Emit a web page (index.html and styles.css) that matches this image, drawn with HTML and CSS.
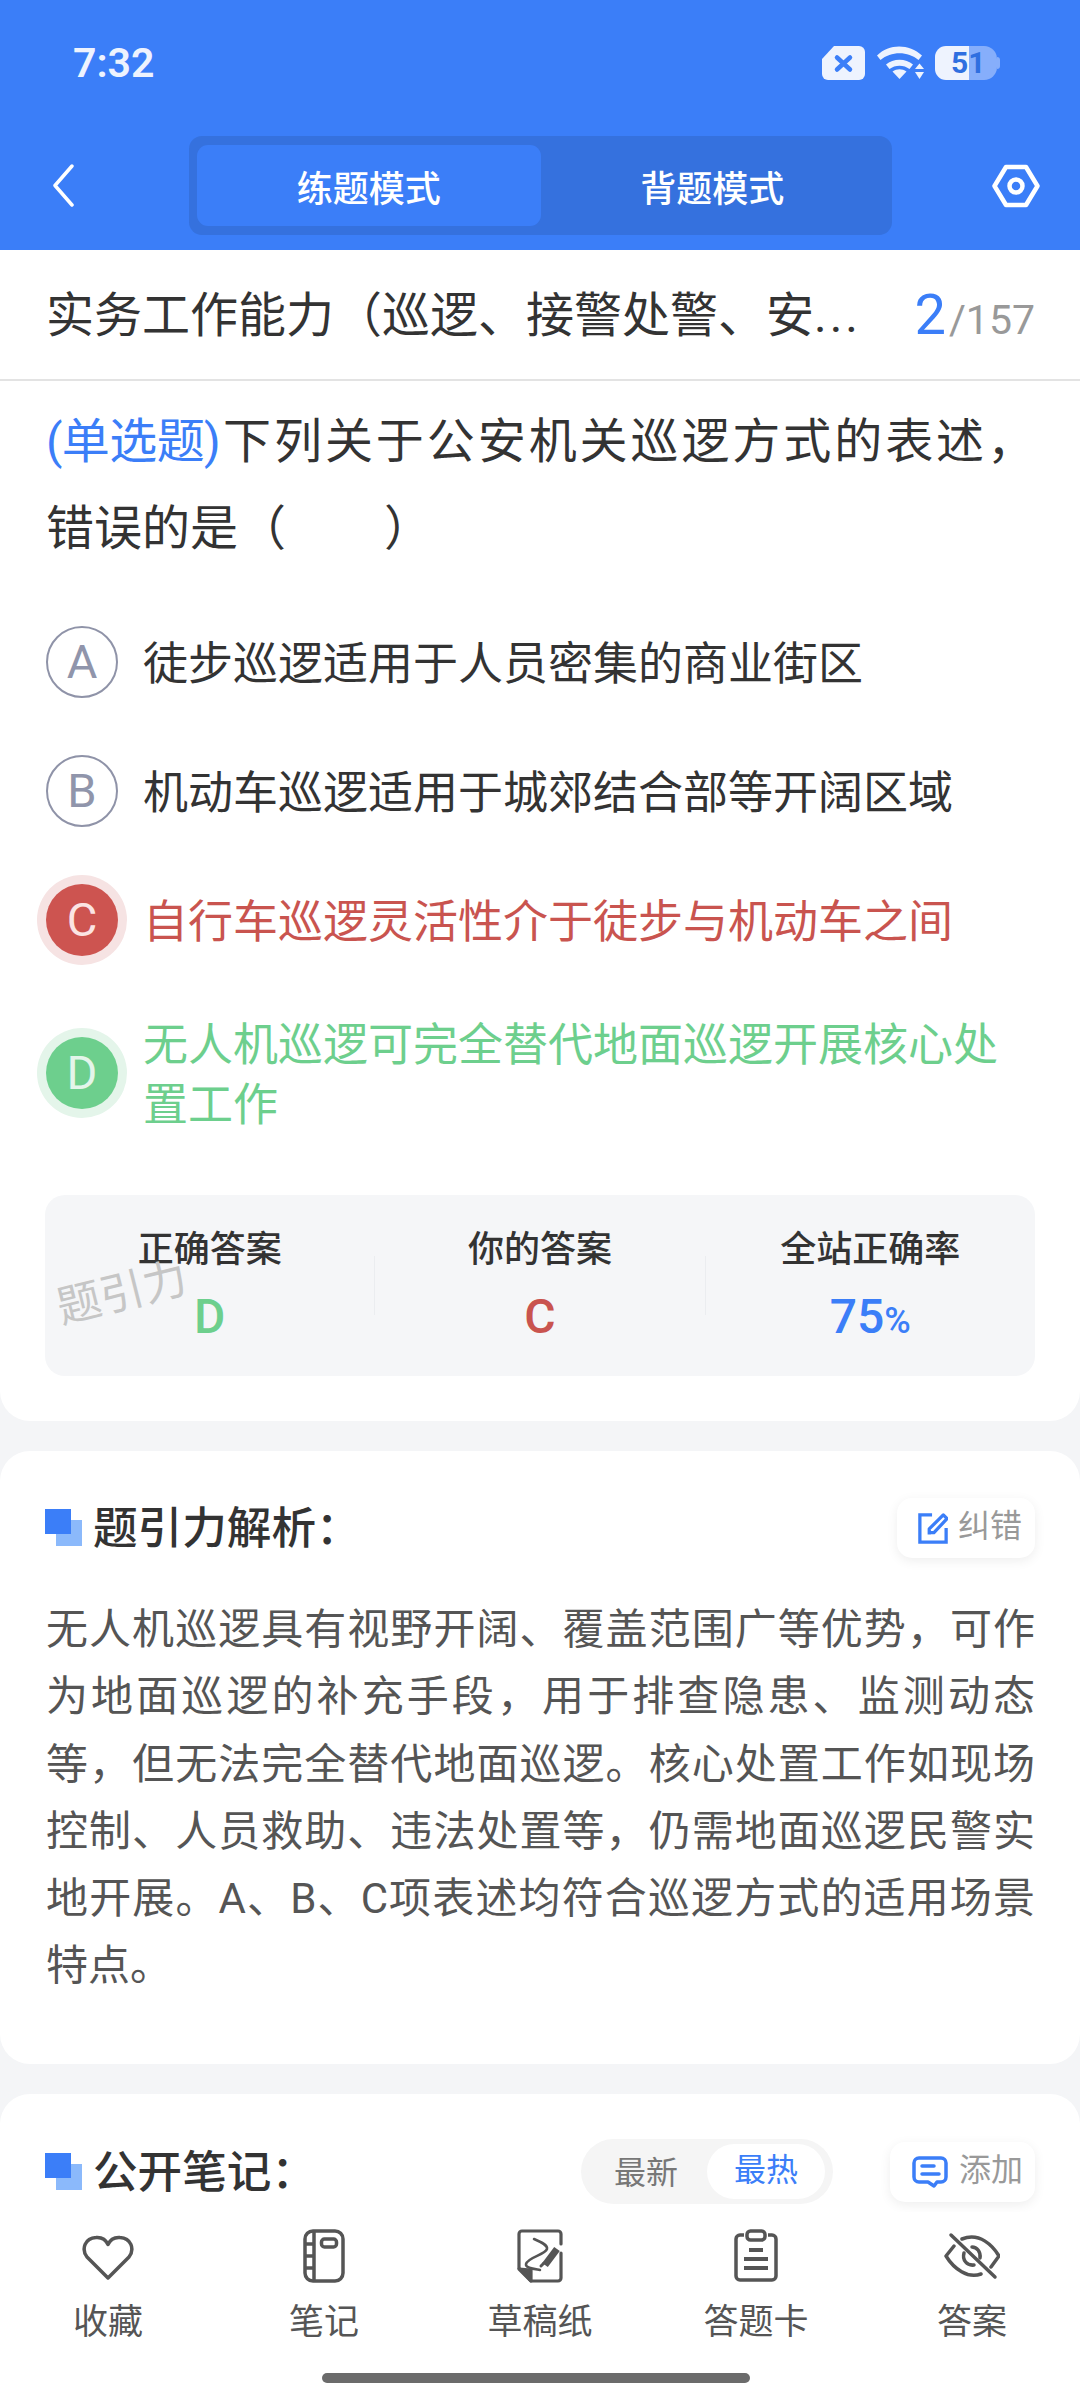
FILE: index.html
```html
<!DOCTYPE html>
<html lang="zh-CN">
<head>
<meta charset="utf-8">
<title>练题模式</title>
<link rel="stylesheet" href="styles.css">
</head>
<body>
<div class="app">
  <header class="top">
    <div class="status">
      <span class="clock">7:32</span>
      <div class="status-icons">
        <svg class="ico-sim" viewBox="0 0 43 34" width="43" height="34">
          <path d="M12 0H37a6 6 0 0 1 6 6V28a6 6 0 0 1-6 6H6a6 6 0 0 1-6-6V13Z" fill="#eef3fe"/>
          <path d="M15 11.500L28 23.500M28 11.500L15 23.500" stroke="#3b7ef8" stroke-width="4.500" stroke-linecap="round"/>
        </svg>
        <svg class="ico-wifi" viewBox="0 0 47 34" width="47" height="34" fill="#eef3fe">
          <path d="M0 9.500C12-2.500 32-2.500 45 9.500L41.500 14C31 5 14 5 3.500 14Z"/>
          <path d="M9 18.500C16 12 29 12 36 18.500L32.500 23C27 18.500 18 18.500 12.500 23Z"/>
          <path d="M15.500 25.500C20 22.500 25 22.500 29.500 25.500L22.500 33Z"/>
          <path d="M42.500 17.500L47 23H38Z"/>
          <path d="M38 26H47L42.500 33Z"/>
        </svg>
        <div class="battery">
          <div class="battery-body">51</div>
          <i class="battery-nub"></i>
        </div>
      </div>
    </div>
    <nav class="nav">
      <svg class="ico-back" viewBox="0 0 23 43" width="23" height="43">
        <path d="M20 2L3 21.500L20 41" fill="none" stroke="#fff" stroke-width="3.500" stroke-linecap="round" stroke-linejoin="round"/>
      </svg>
      <div class="mode-tabs">
        <div class="mode-tab mode-tab-on">练题模式</div>
        <div class="mode-tab">背题模式</div>
      </div>
      <svg class="ico-hex" viewBox="0 0 48 44" width="48" height="44">
        <path d="M14 3H34L45.500 22L34 41H14L2.500 22Z" fill="none" stroke="#fff" stroke-width="4.500" stroke-linejoin="round"/>
        <circle cx="24" cy="22" r="6.500" fill="none" stroke="#fff" stroke-width="4.500"/>
      </svg>
    </nav>
  </header>

  <main class="scroll">
    <section class="card card-question">
      <div class="title-row">
        <h1 class="paper-title">实务工作能力（巡逻、接警处警、安<span class="title-more">...</span></h1>
        <div class="progress"><span class="progress-now">2</span><span class="progress-all">/157</span></div>
      </div>
      <div class="question-body">
        <p class="question"><span class="question-type">(单选题)</span>下列关于公安机关巡逻方式的表述&#xFF0C;错误的是（&emsp;&emsp;）</p>
        <ul class="options">
          <li class="option"><span class="badge">A</span><span class="option-text">徒步巡逻适用于人员密集的商业街区</span></li>
          <li class="option"><span class="badge">B</span><span class="option-text">机动车巡逻适用于城郊结合部等开阔区域</span></li>
          <li class="option option-wrong"><span class="badge">C</span><span class="option-text">自行车巡逻灵活性介于徒步与机动车之间</span></li>
          <li class="option option-right"><span class="badge">D</span><span class="option-text">无人机巡逻可完全替代地面巡逻开展核心处置工作</span></li>
        </ul>
        <div class="stats">
          <span class="watermark">题引力</span>
          <div class="stat"><div class="stat-label">正确答案</div><div class="stat-value green">D</div></div>
          <i class="stat-rule"></i>
          <div class="stat"><div class="stat-label">你的答案</div><div class="stat-value red">C</div></div>
          <i class="stat-rule"></i>
          <div class="stat"><div class="stat-label">全站正确率</div><div class="stat-value blue">75<small>%</small></div></div>
        </div>
      </div>
    </section>

    <section class="card card-analysis">
      <div class="section-head">
        <svg class="mark" viewBox="0 0 37 37" width="37" height="37"><rect x="11" y="11" width="26" height="26" fill="#8bb9fb"/><rect width="26" height="25" fill="#3b7ef8"/></svg>
        <h2 class="section-title">题引力解析&#xFF1A;</h2>
        <div class="chip">
          <svg viewBox="0 0 32 34" width="30" height="32" fill="none" stroke="#3b7ef8" stroke-width="3.500">
            <path d="M15 3H2V32H30V17"/>
            <path d="M12 24V18L27 3L31 7L17 22H11" stroke-linejoin="round"/>
          </svg>
          <span>纠错</span>
        </div>
      </div>
      <p class="analysis">无人机巡逻具有视野开阔、覆盖范围广等优势&#xFF0C;可作为地面巡逻的补充手段&#xFF0C;用于排查隐患、监测动态等&#xFF0C;但无法完全替代地面巡逻。核心处置工作如现场控制、人员救助、违法处置等&#xFF0C;仍需地面巡逻民警实地开展。A、B、C项表述均符合巡逻方式的适用场景特点。</p>
    </section>

    <section class="card card-notes">
      <div class="section-head">
        <svg class="mark" viewBox="0 0 37 37" width="37" height="37"><rect x="11" y="11" width="26" height="26" fill="#8bb9fb"/><rect width="26" height="25" fill="#3b7ef8"/></svg>
        <h2 class="section-title">公开笔记&#xFF1A;</h2>
        <div class="sort">
          <span class="sort-item">最新</span>
          <span class="sort-item sort-item-on">最热</span>
        </div>
        <div class="chip chip-add">
          <svg viewBox="0 0 36 32" width="36" height="32" fill="none" stroke="#3b7ef8" stroke-width="3.500" stroke-linecap="round" stroke-linejoin="round">
            <path d="M7 2H29a5 5 0 0 1 5 5V21a5 5 0 0 1-5 5H25L22 30L16 26H7a5 5 0 0 1-5-5V7a5 5 0 0 1 5-5Z"/>
            <path d="M10 10H22M10 18H27"/>
          </svg>
          <span>添加</span>
        </div>
      </div>
    </section>
  </main>

  <footer class="tabbar">
    <div class="tools">
      <div class="tool">
        <svg viewBox="0 -2 52 46" width="52" height="46" fill="none" stroke="#555" stroke-width="3.500" stroke-linejoin="round">
          <path d="M26 43L5 22C-1 14 3 3 14 2.500C20 2 24 5 26 9.500C28 5 32 2 38 2.500C49 3 53 14 47 22Z"/>
        </svg>
        <span>收藏</span>
      </div>
      <div class="tool">
        <svg viewBox="0 0 42 54" width="42" height="54" fill="none" stroke="#555" stroke-width="3.500" stroke-linejoin="round">
          <rect x="2" y="2" width="38" height="50" rx="8"/>
          <path d="M11 2V52M2 15H11M2 27H11M2 39H11"/>
          <rect x="18.500" y="10" width="15" height="8" rx="3"/>
        </svg>
        <span>笔记</span>
      </div>
      <div class="tool">
        <svg viewBox="0 0 46 54" width="46" height="54" fill="none" stroke="#555" stroke-width="3.200" stroke-linejoin="round" stroke-linecap="round">
          <path d="M44 15V5a3 3 0 0 0-3-3H5a3 3 0 0 0-3 3V39L14 52H41a3 3 0 0 0 3-3V24"/>
          <path d="M2 40L14 41V52Z" fill="#555"/>
          <path d="M17 10C24 13 31 16 30 20C28 26 11 28 9 35C8 39 18 40 23 41" stroke-width="2.500"/>
          <path d="M28 36L40 20" stroke-width="7" stroke-linecap="butt"/>
          <path d="M24 37L27 34" stroke-width="3"/>
        </svg>
        <span>草稿纸</span>
      </div>
      <div class="tool">
        <svg viewBox="0 0 46 54" width="46" height="54" fill="none" stroke="#555" stroke-width="3.500" stroke-linejoin="round">
          <path d="M11 6H7a4 4 0 0 0-4 4V47a4 4 0 0 0 4 4H39a4 4 0 0 0 4-4V10a4 4 0 0 0-4-4H35"/>
          <rect x="14" y="2" width="18" height="9" rx="3.500"/>
          <path d="M16 21H30M11 30H35M11 39H35" stroke-width="3.800"/>
        </svg>
        <span>答题卡</span>
      </div>
      <div class="tool">
        <svg viewBox="0 0 56 46" width="56" height="46" fill="none" stroke="#555" stroke-width="3.500" stroke-linecap="round" stroke-linejoin="round">
          <path d="M7 2L51 44"/>
          <path d="M18 6C36-1 49 13 55 23L47 34"/>
          <path d="M10 13L2 23C10 36 24 46 37 41"/>
          <path d="M36 25C37 19 33 14 28 14"/>
          <path d="M20 20C18 27 23 33 30 32"/>
        </svg>
        <span>答案</span>
      </div>
    </div>
    <div class="home-bar"></div>
  </footer>
</div>
</body>
</html>
```
FILE: styles.css
```css
* { box-sizing: border-box; }

html, body { margin: 0; padding: 0; }

body {
  background: #fff;
  color: #333;
  font-family: Roboto, "Noto Sans CJK SC", sans-serif;
}

h1, h2, p, ul { margin: 0; padding: 0; }

.app {
  width: 1080px;
  height: 2400px;
  display: flex;
  flex-direction: column;
  overflow: hidden;
  background: #f4f5f7;
}

/* Blue top area */
.top {
  flex: none;
  height: 250px;
  padding-top: 46px;
  background: #3b7ef8;
  color: #fff;
}

.status {
  display: flex;
  align-items: center;
  justify-content: space-between;
  height: 34px;
  padding: 0 80px 0 73px;
}

.clock { font-size: 41px; font-weight: 600; color: #eef3fe; }

.status-icons { display: flex; align-items: center; gap: 11px; }

.ico-sim, .ico-wifi { display: block; }

.ico-wifi { margin-left: 1px; }

.battery { display: flex; align-items: center; }

.battery-body {
  width: 62px;
  height: 34px;
  border-radius: 11px 13px 13px 11px;
  background: linear-gradient(90deg, #eef3fe 0 34px, #86aefb 34px);
  color: #2f6fe0;
  font-size: 30px;
  font-weight: 700;
  line-height: 34px;
  padding-left: 16px;
}

.battery-nub {
  width: 3px;
  height: 12px;
  border-radius: 0 3px 3px 0;
  background: #86aefb;
}

.nav {
  display: flex;
  align-items: center;
  height: 99px;
  margin-top: 56px;
  padding: 0 40px 0 52px;
}

.ico-back { flex: none; }

.mode-tabs {
  flex: none;
  display: flex;
  width: 703px;
  height: 99px;
  margin: 0 100px 0 114px;
  padding: 9px 8px;
  border-radius: 13px;
  background: #3571de;
}

.mode-tab {
  flex: 1;
  display: flex;
  align-items: center;
  justify-content: center;
  border-radius: 11px;
  font-size: 36px;
  font-weight: 500;
  color: #fff;
}

.mode-tab-on { background: #3b7ef8; }

/* Scrolling content */
.scroll {
  flex: 1;
  min-height: 0;
  overflow: hidden;
  display: flex;
  flex-direction: column;
  gap: 30px;
}

.card {
  flex: none;
  background: #fff;
  border-radius: 30px;
}

.card-question {
  height: 1171px;
  border-radius: 0 0 30px 30px;
}

.title-row {
  display: flex;
  align-items: center;
  justify-content: space-between;
  height: 131px;
  padding: 0 45px 0 46px;
  border-bottom: 2px solid #e3e3e3;
}

.paper-title {
  padding-bottom: 8px;
  font-size: 48px;
  font-weight: 400;
  color: #333;
  white-space: nowrap;
}

.title-more { letter-spacing: 3px; }

.progress { display: flex; align-items: baseline; }

.progress-now { font-size: 56px; color: #3b7ef8; margin-right: 3px; }

.progress-all { font-size: 41px; color: #999; }

.question-body { padding: 17px 45px 0; }

.question {
  margin-left: 1px;
  font-size: 48px;
  line-height: 87px;
  text-align: justify;
  color: #333;
}

.question-type { display: inline-block; letter-spacing: -0.600px; color: #3b7ef8; }

.options {
  list-style: none;
  display: flex;
  flex-direction: column;
  gap: 57px;
  margin: 54px 0 0 1px;
}

.option {
  display: flex;
  align-items: center;
  gap: 26px;
  min-height: 72px;
  font-size: 45px;
  line-height: 60px;
  color: #333;
}

.option-text {
  margin-left: -1px;
  padding-top: 3px;
  margin-bottom: -3px;
}

.badge {
  flex: none;
  display: flex;
  align-items: center;
  justify-content: center;
  width: 72px;
  height: 72px;
  border: 2px solid #8f93a8;
  border-radius: 50%;
  color: #9095ab;
  font-size: 47px;
  font-weight: 400;
}

.option-wrong { color: #c9544f; }

.option-wrong .badge {
  border: 0;
  background: #cd5450;
  color: #fbe4e3;
  box-shadow: 0 0 0 9px #f6e3e3;
}

.option-right { color: #6dcf8d; }

.option-right .badge {
  border: 0;
  background: #6dcf8d;
  color: #e4f5ea;
  box-shadow: 0 0 0 9px #e4f5ea;
}

.stats {
  position: relative;
  display: flex;
  height: 181px;
  margin-top: 62px;
  border-radius: 20px;
  background: #f5f6f8;
  text-align: center;
}

.stat { flex: 1; padding-top: 30px; }

.stat-label {
  font-size: 36px;
  font-weight: 500;
  line-height: 50px;
  color: #333;
}

.stat-value {
  margin-top: 12px;
  font-size: 48px;
  font-weight: 500;
  line-height: 60px;
}

.stat-value small { font-size: 36px; }

.stat-rule {
  flex: none;
  width: 1px;
  height: 59px;
  margin-top: 61px;
  background: #ebedf0;
}

.green { color: #6dcf8d; }
.red { color: #c9544f; }
.blue { color: #3b7ef8; }

.watermark {
  position: absolute;
  left: 11px;
  top: 70px;
  font-size: 44px;
  line-height: 56px;
  color: #c6c6c6;
  transform: rotate(-14deg);
}

.section-head { display: flex; align-items: center; }

.mark { flex: none; margin-right: 11px; }

.section-title {
  flex: 1;
  padding-bottom: 6px;
  font-size: 44.600px;
  font-weight: 500;
  color: #333;
  white-space: nowrap;
}

.chip {
  flex: none;
  display: flex;
  align-items: center;
  gap: 10px;
  width: 138px;
  height: 60px;
  padding: 0 0 0 21px;
  border-radius: 15px;
  background: #fff;
  box-shadow: 0 3px 12px rgba(0, 0, 0, 0.07);
  font-size: 32px;
  color: #999;
}

.chip span { padding-bottom: 9px; }

.chip-add { width: 145px; margin-left: 57px; padding-left: 22px; gap: 11px; }

.card-analysis { height: 613px; padding: 41px 45px 0 45px; }

.analysis {
  margin: 33px 0 0 1px;
  font-size: 42px;
  line-height: 67.300px;
  text-align: justify;
  color: #555;
}

.card-notes { height: 200px; padding: 45px 45px 0 45px; }

.card-notes .section-head { height: 65px; }

.sort {
  flex: none;
  display: flex;
  align-items: center;
  width: 252px;
  height: 65px;
  padding: 0 8px 0 33px;
  border-radius: 33px;
  background: #f5f5f5;
  font-size: 32px;
  color: #777;
}

.sort-item { flex: none; width: 93px; padding-bottom: 3px; }

.sort-item-on {
  width: 118px;
  height: 55px;
  padding-bottom: 0;
  line-height: 52px;
  text-align: center;
  border-radius: 28px;
  background: #fff;
  color: #3b7ef8;
}

/* Bottom tool bar */
.tabbar {
  flex: none;
  height: 188px;
  padding-top: 17px;
  background: #fff;
}

.tools { display: grid; grid-template-columns: repeat(5, 216px); }

.tool {
  display: flex;
  flex-direction: column;
  align-items: center;
  font-size: 35px;
  line-height: 46px;
  color: #555;
}

.tool svg { display: block; margin-bottom: 17px; height: 54px; }

.home-bar {
  width: 428px;
  height: 10px;
  margin: 27px 0 0 322px;
  border-radius: 5px;
  background: #6b6b6b;
}
```
